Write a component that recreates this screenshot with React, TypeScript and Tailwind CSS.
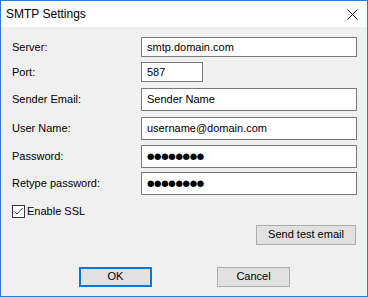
import React from "react";

const font = "font-['Liberation_Sans',Arial,sans-serif]";

function Field({ label, value, h, mt, w = "w-[216px]", password = false }: { label: string; value: string; h: string; mt: string; w?: string; password?: boolean }) {
  return (
    <div className={`flex items-center ${mt}`}>
      <div className="w-[129px] text-[11px] text-black">{label}</div>
      <div className={`${w} ${h} bg-white border border-[#7a7a7a] flex items-center pl-[5px]`}>
        {password ? (
          <span className="font-['DejaVu_Sans'] text-[8.5px] tracking-[-0.3px] text-black leading-none">{value}</span>
        ) : (
          <span className="text-[11px] text-black leading-none">{value}</span>
        )}
      </div>
    </div>
  );
}

export default function App() {
  return (
    <div className={`w-[368px] h-[297px] border border-[#2b7bd0] bg-[#f0f0f0] flex flex-col ${font}`}>
      <div className="h-[26px] bg-white flex items-center justify-between pl-[5px] pr-[9px] shrink-0">
        <span className="text-[12px] text-black">SMTP Settings</span>
        <svg width="11" height="11" viewBox="0 0 11 11">
          <path d="M0.5 0.5 L10.5 10.5 M10.5 0.5 L0.5 10.5" stroke="#000" strokeWidth="1" />
        </svg>
      </div>
      <div className="flex flex-col pl-[11px] pt-[10px]">
        <Field label="Server:" value="smtp.domain.com" h="h-[20px]" mt="" />
        <Field label="Port:" value="587" h="h-[20px]" mt="mt-[5px]" w="w-[62px]" />
        <Field label="Sender Email:" value="Sender Name" h="h-[23px]" mt="mt-[6px]" />
        <Field label="User Name:" value="username@domain.com" h="h-[23px]" mt="mt-[6px]" />
        <Field label="Password:" value="●●●●●●●●" h="h-[23px]" mt="mt-[5px]" password />
        <Field label="Retype password:" value="●●●●●●●●" h="h-[23px]" mt="mt-[4px]" password />
        <div className="flex items-center mt-[8px]">
          <div className="w-[13px] h-[13px] border border-[#333333] bg-white flex items-center justify-center">
            <svg width="11" height="11" viewBox="0 0 11 11">
              <path d="M1.5 5.5 L4 8 L9.5 2" stroke="#4a4a4a" strokeWidth="1" fill="none" />
            </svg>
          </div>
          <span className="ml-[2px] text-[11px] text-black">Enable SSL</span>
        </div>
        <div className="flex justify-end mt-[5px] pr-[11px]">
          <div className="w-[100px] h-[20px] bg-[#e1e1e1] border border-[#adadad] flex items-center justify-center text-[11px] text-black">
            Send test email
          </div>
        </div>
        <div className="flex mt-[22px] pl-[67px]">
          <div className="w-[73px] h-[20px] bg-[#e1e1e1] border-2 border-[#0078d7] flex items-center justify-center text-[11px] text-black">
            OK
          </div>
          <div className="ml-[65px] w-[73px] h-[20px] bg-[#e1e1e1] border border-[#adadad] flex items-center justify-center text-[11px] text-black">
            Cancel
          </div>
        </div>
      </div>
    </div>
  );
}
